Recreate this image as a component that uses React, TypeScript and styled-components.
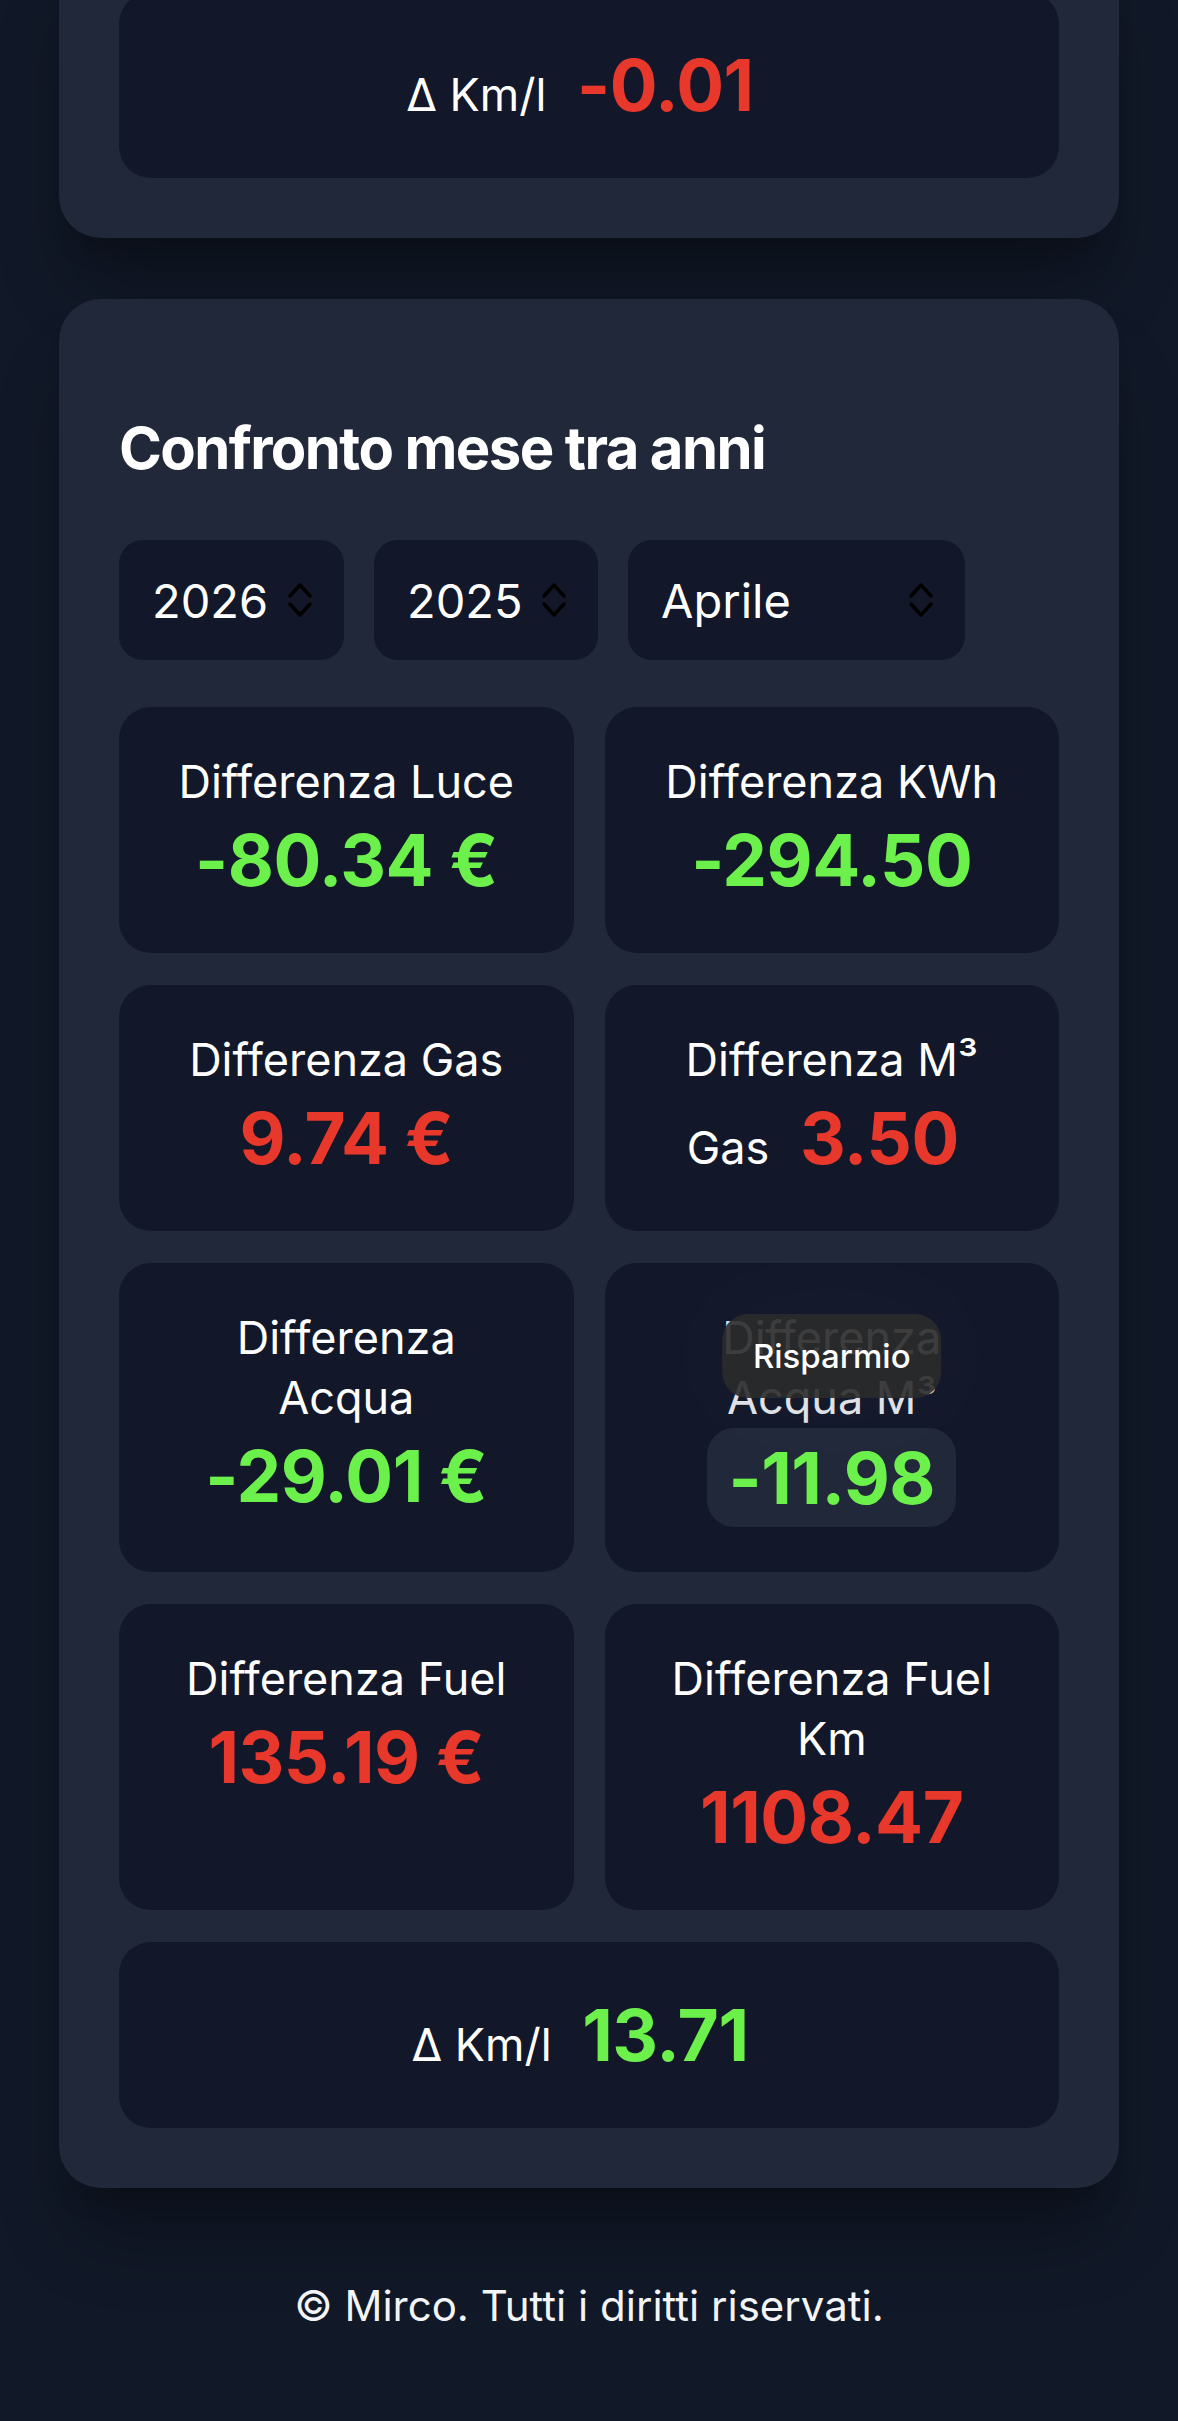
import React from "react";
import styled, { createGlobalStyle } from "styled-components";

type Tone = "good" | "bad";

type Stat = {
  label: string;
  value: string;
  tone: Tone;
  tip?: string;
};

const stats: Stat[] = [
  { label: "Differenza Luce", value: "-80.34 €", tone: "good" },
  { label: "Differenza KWh", value: "-294.50", tone: "good" },
  { label: "Differenza Gas", value: "9.74 €", tone: "bad" },
  { label: "Differenza M³ Gas", value: "3.50", tone: "bad" },
  { label: "Differenza Acqua", value: "-29.01 €", tone: "good" },
  { label: "Differenza Acqua M³", value: "-11.98", tone: "good", tip: "Risparmio" },
  { label: "Differenza Fuel", value: "135.19 €", tone: "bad" },
  { label: "Differenza Fuel Km", value: "1108.47", tone: "bad" },
];

const months = [
  "Gennaio",
  "Febbraio",
  "Marzo",
  "Aprile",
  "Maggio",
  "Giugno",
  "Luglio",
  "Agosto",
  "Settembre",
  "Ottobre",
  "Novembre",
  "Dicembre",
];

const years = ["2023", "2024", "2025", "2026"];

function Chevrons() {
  return (
    <svg width="26" height="38" viewBox="0 0 26 38" fill="none">
      <polyline
        points="3,15 13,4 23,15"
        stroke="#000"
        strokeWidth="3.5"
        strokeLinecap="round"
        strokeLinejoin="round"
      />
      <polyline
        points="3,23 13,34 23,23"
        stroke="#000"
        strokeWidth="3.5"
        strokeLinecap="round"
        strokeLinejoin="round"
      />
    </svg>
  );
}

function Picker({ width, value, options }: { width: number; value: string; options: string[] }) {
  return (
    <SelectBox $w={width}>
      <NativeSelect defaultValue={value}>
        {options.map((o) => (
          <option key={o} value={o}>
            {o}
          </option>
        ))}
      </NativeSelect>
      <Chevrons />
    </SelectBox>
  );
}

function StatTile({ stat }: { stat: Stat }) {
  return (
    <Tile>
      <Label $dim={!!stat.tip}>{stat.label}</Label>{" "}
      {stat.tip ? (
        <Chip>
          <Value $tone={stat.tone}>{stat.value}</Value>
          <Tooltip>{stat.tip}</Tooltip>
        </Chip>
      ) : (
        <Value $tone={stat.tone}>{stat.value}</Value>
      )}
    </Tile>
  );
}

function DeltaTile({ value, tone }: { value: string; tone: Tone }) {
  return (
    <Tile $wide>
      <Label>Δ Km/l</Label> <Value $tone={tone}>{value}</Value>
    </Tile>
  );
}

export default function App() {
  return (
    <>
      <GlobalStyle />
      <Page>
        <Card>
          <Grid>
            <DeltaTile value="-0.01" tone="bad" />
          </Grid>
        </Card>

        <Card>
          <Title>Confronto mese tra anni</Title>
          <SelectRow>
            <Picker width={225} value="2026" options={years} />
            <Picker width={224} value="2025" options={years} />
            <Picker width={337} value="Aprile" options={months} />
          </SelectRow>
          <Grid>
            {stats.map((s) => (
              <StatTile key={s.label} stat={s} />
            ))}
            <DeltaTile value="13.71" tone="good" />
          </Grid>
        </Card>
      </Page>
      <Footer>© Mirco. Tutti i diritti riservati.</Footer>
    </>
  );
}

const GlobalStyle = createGlobalStyle`
  html, body {
    margin: 0;
    padding: 0;
    background: #111827;
  }
  body {
    font-family: Inter, "Noto Sans", "Liberation Sans", sans-serif;
    color: #fff;
    -webkit-font-smoothing: antialiased;
  }
`;

const Page = styled.main`
  display: flex;
  flex-direction: column;
  gap: 61px;
  margin-top: -68px;
  padding: 0 59px;
`;

const Card = styled.section`
  background: #212839;
  border-radius: 42px;
  padding: 60px;
  box-shadow: 0 60px 75px -15px rgba(0, 0, 0, 0.28), 0 24px 30px -18px rgba(0, 0, 0, 0.22);
`;

const Title = styled.h2`
  margin: 47px 0 50px;
  font-size: 58px;
  line-height: 84px;
  font-weight: 700;
  letter-spacing: -1.6px;
  color: #fff;
`;

const SelectRow = styled.div`
  display: flex;
  gap: 30px;
  margin-bottom: 47px;
`;

const SelectBox = styled.label<{ $w: number }>`
  width: ${(p) => p.$w}px;
  height: 120px;
  box-sizing: border-box;
  display: flex;
  align-items: center;
  gap: 18px;
  padding: 0 31px 0 33px;
  background: #121829;
  border-radius: 24px;
`;

const NativeSelect = styled.select`
  appearance: none;
  -webkit-appearance: none;
  flex: 1;
  min-width: 0;
  padding: 0;
  border: 0;
  outline: none;
  background: transparent;
  color: #fff;
  font-family: Inter, "Noto Sans", sans-serif;
  font-size: 47px;
  font-weight: 400;
`;

const Grid = styled.div`
  display: grid;
  grid-template-columns: 1fr 1fr;
  column-gap: 31px;
  row-gap: 32px;
`;

const Tile = styled.div<{ $wide?: boolean }>`
  grid-column: ${(p) => (p.$wide ? "1 / -1" : "auto")};
  background: #121829;
  border-radius: 32px;
  padding: 45px 48px;
  text-align: center;
  font-size: 45px;
  line-height: 60px;
`;

const Label = styled.span<{ $dim?: boolean }>`
  color: ${(p) => (p.$dim ? "#dfe1e6" : "#fff")};
`;

const Value = styled.span<{ $tone: Tone }>`
  margin: 0 18px;
  font-size: 71px;
  line-height: 96px;
  font-weight: 700;
  letter-spacing: -0.5px;
  color: ${(p) => (p.$tone === "good" ? "#6cf04b" : "#e8372b")};
`;

const Chip = styled.span`
  position: relative;
  display: inline-block;
  padding: 1.5px 3px;
  border-radius: 27px;
  background: #212839;
  font-size: 71px;
  line-height: 96px;
`;

const Tooltip = styled.span`
  position: absolute;
  left: 50%;
  bottom: calc(100% + 30px);
  transform: translateX(-50%);
  white-space: nowrap;
  padding: 22px 31px;
  border-radius: 26px;
  background: rgba(43, 43, 43, 0.9);
  box-shadow: 0 0 120px 40px rgba(255, 255, 255, 0.02);
  color: #fff;
  font-size: 33px;
  line-height: 40px;
  font-weight: 500;
`;

const Footer = styled.footer`
  padding: 88px 0 84px;
  text-align: center;
  font-size: 42px;
  line-height: 60px;
  color: #f3f4f6;
`;
